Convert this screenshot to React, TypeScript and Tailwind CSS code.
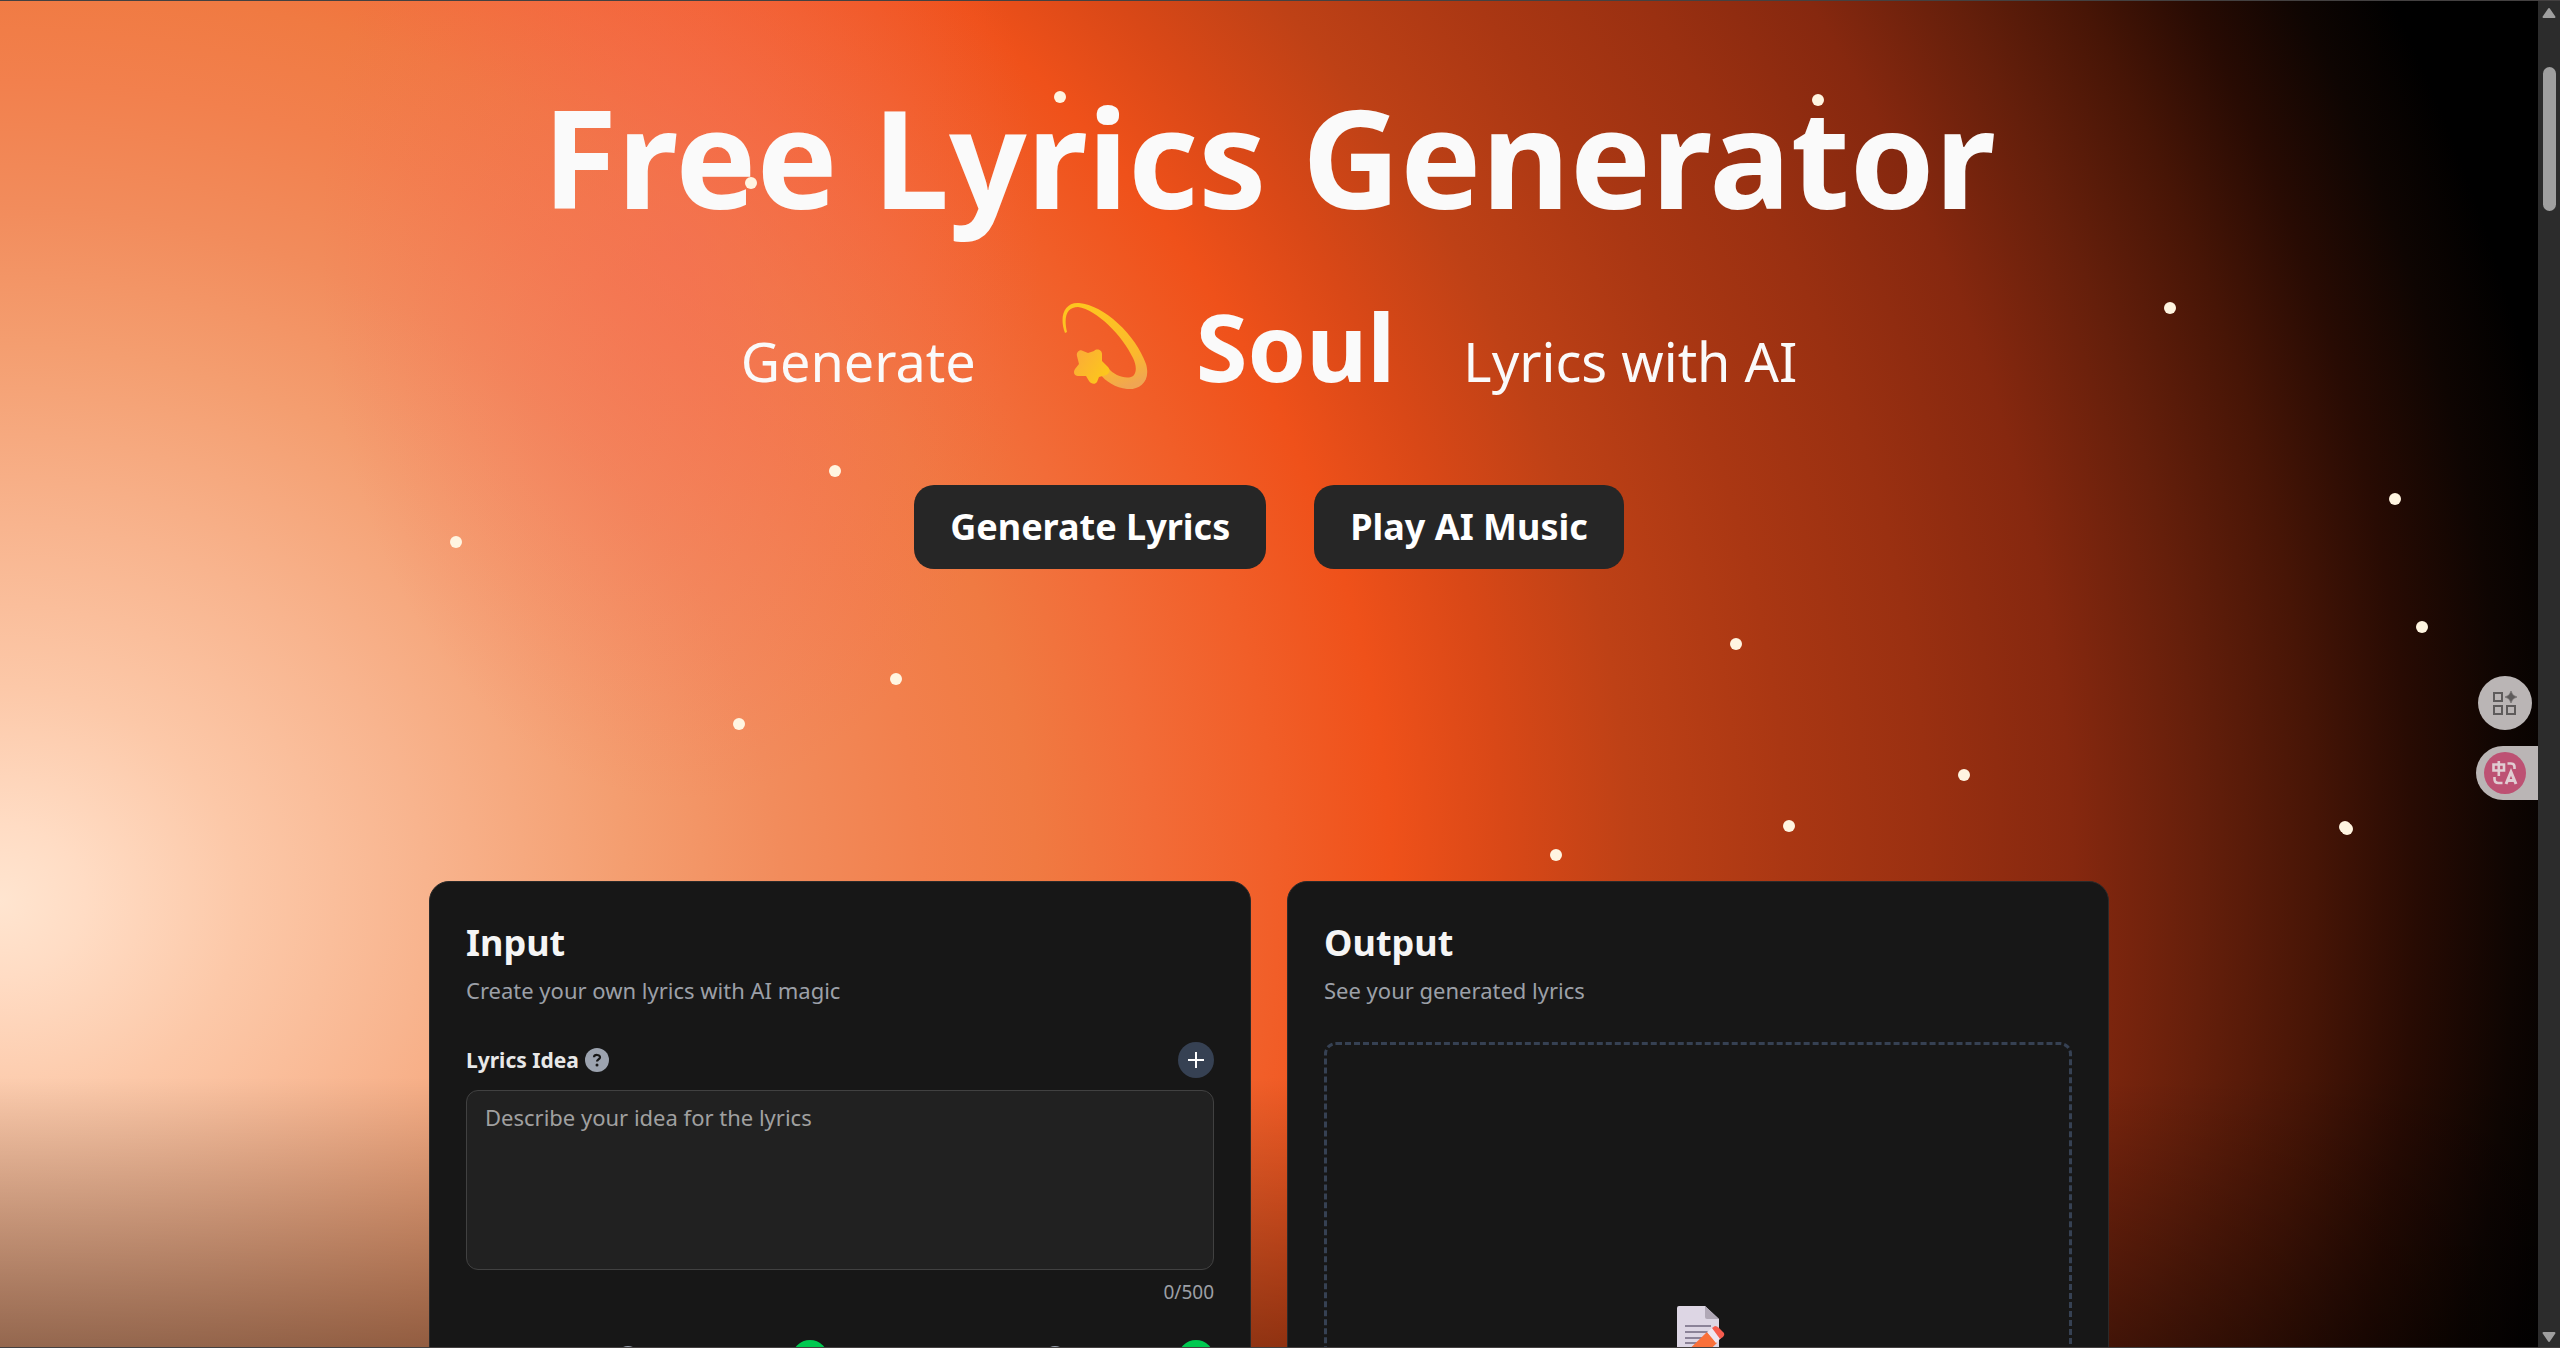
import React from "react";

const particles = [
  { x: 1060, y: 96 },
  { x: 751, y: 182 },
  { x: 1818, y: 99 },
  { x: 2170, y: 307 },
  { x: 835, y: 470 },
  { x: 456, y: 541 },
  { x: 2395, y: 498 },
  { x: 2422, y: 626 },
  { x: 1736, y: 643 },
  { x: 896, y: 678 },
  { x: 739, y: 723 },
  { x: 1964, y: 774 },
  { x: 1789, y: 825 },
  { x: 1556, y: 854 },
  { x: 2345, y: 826 },
  { x: 2347, y: 828 },
];

function DizzyStar() {
  return (
    <svg viewBox="0 0 88 88" className="size-[88px] self-center" aria-hidden="true">
      <defs>
        <linearGradient id="trail" x1="0.3" y1="0" x2="0.7" y2="1">
          <stop offset="0" stopColor="#fdc61f" />
          <stop offset="0.7" stopColor="#fbb82d" />
          <stop offset="1" stopColor="#f0a552" />
        </linearGradient>
        <linearGradient id="star" x1="0" y1="0" x2="1" y2="0.6">
          <stop offset="0" stopColor="#fba93a" />
          <stop offset="1" stopColor="#fcc71c" />
        </linearGradient>
      </defs>
      <path
        d="M5 31 C-1 15 4 0 19 1 C44 3 76 33 86 62 C91 79 80 88 67 87 C56 86 45 79 40 72 L48 66 C54 73 64 77 71 75 C77 73 77 64 73 56 C62 33 37 8 18 5 C8 5 3 13 7 30 Z"
        fill="url(#trail)"
      />
      <path
        d="M34 49 C37 46 42 48 42 52 L42 59 L48 65 C51 68 49 72 46 73 L39 75 L37 80 C35 83 31 82 29 79 L26 74 L18 74 C14 74 13 70 15 67 L19 62 L17 54 C16 50 20 47 23 49 L28 51 Z"
        fill="url(#star)"
      />
    </svg>
  );
}

function DocumentPencil() {
  return (
    <svg viewBox="0 0 96 96" className="size-24" aria-hidden="true">
      <path d="M27 9 H55 L69 22 V86 H29 Q27 86 27 84 V11 Q27 9 29 9 Z" fill="#ddd6e4" />
      <path d="M55 9 L69 22 H57 Q55 22 55 20 Z" fill="#b0a8b6" />
      <path d="M35 29 H61 M35 35 H61 M35 41 H58 M35 46 H54 M35 52 H50" stroke="#8b8398" strokeWidth="2" />
      <path d="M57 35 L67 46 L35 76 L25 66 Z" fill="#f9703a" />
      <path d="M57 35 L62 31 L71 41 L66 46 Z" fill="#eee6f2" />
      <path d="M62 31 L65 29 Q67 29 69 31 L74 36 Q75 38 73 40 L70 42 Z" fill="#f65c4e" />
    </svg>
  );
}

function HelpIcon() {
  return (
    <svg viewBox="0 0 24 24" className="size-6" aria-hidden="true">
      <circle cx="12" cy="12" r="12" fill="#9ca3af" />
      <path d="M9 9.2 C9.2 6.2 15.2 6.2 15 9.4 C14.8 11.4 12 11.4 12 13.6" fill="none" stroke="#171717" strokeWidth="2.2" />
      <circle cx="12" cy="17" r="1.5" fill="#171717" />
    </svg>
  );
}

function OptionHeader({ labelWidth, name }: { labelWidth: string; name: string }) {
  return (
    <div className="flex items-center justify-between">
      <div className={"flex justify-end " + labelWidth}>
        <HelpIcon />
      </div>
      <button aria-label={name} className="size-9 rounded-full bg-[#00c950]" />
    </div>
  );
}

function Card({ title, subtitle, children }: { title: string; subtitle: string; children: React.ReactNode }) {
  return (
    <section className="h-[1100px] flex-1 rounded-[20px] border border-[#2b2a2a] bg-[#171717] p-9">
      <h2 className="text-[36px] leading-[50px] font-bold text-[#f5f5f5]">{title}</h2>
      <p className="text-[22px] leading-[44px] text-[#9ca0a8]">{subtitle}</p>
      {children}
    </section>
  );
}

function FloatingTools() {
  return (
    <div className="absolute top-[675px] right-0 flex flex-col items-end gap-4">
      <button aria-label="Extensions" className="mr-1.5 flex size-[54px] items-center justify-center rounded-full bg-[#bab5b5]">
        <svg viewBox="0 0 24 24" className="size-6" fill="none" stroke="#5e5b5b" strokeWidth="2" aria-hidden="true">
          <rect x="1" y="2" width="8" height="8" />
          <rect x="1" y="15" width="8" height="8" />
          <rect x="14" y="15" width="8" height="8" />
          <path d="M18 0 Q19 5 24 6 Q19 7 18 12 Q17 7 12 6 Q17 5 18 0Z" fill="#5e5b5b" strokeWidth="0.5" />
        </svg>
      </button>
      <button aria-label="Translate" className="flex h-[54px] w-[62px] items-center rounded-l-full bg-[#bab5b5] pl-2">
        <svg viewBox="0 0 42 42" className="size-[42px]" fill="none" stroke="#e0ccd2" strokeWidth="2.600" aria-hidden="true">
          <circle cx="21" cy="21" r="21" fill="#bd5173" stroke="none" />
          <path d="M9.500 12.500 H20 V18.500 H9.500 Z M14.800 9 V24" />
          <path d="M23.500 11.500 H27 Q30.500 11.500 30.500 15 V17" />
          <path d="M10.500 25 V27 Q10.500 31 14.500 31 H18.500" />
          <path d="M22 32 L27 20 L32 32 M23.500 28.500 H30.500" strokeWidth="3" />
        </svg>
      </button>
    </div>
  );
}

function Scrollbar() {
  return (
    <div className="flex w-[22px] shrink-0 flex-col items-center justify-between bg-[#2c2c2c] pt-1.5 pb-1">
      <div className="flex flex-col items-center gap-12">
        <svg viewBox="0 0 14 12" className="h-3 w-3.5" aria-hidden="true">
          <path d="M7 2 L12.500 10 H1.500 Z" fill="#9f9f9f" stroke="#9f9f9f" strokeWidth="2" strokeLinejoin="round" />
        </svg>
        <div className="h-36 w-[13px] rounded-full bg-[#9f9f9f]" />
      </div>
      <svg viewBox="0 0 14 12" className="h-3 w-3.5" aria-hidden="true">
        <path d="M7 10 L12.500 2 H1.500 Z" fill="#9f9f9f" stroke="#9f9f9f" strokeWidth="2" strokeLinejoin="round" />
      </svg>
    </div>
  );
}

export default function App() {
  return (
    <div className="flex h-screen overflow-hidden border-y border-[#444141] bg-black font-['Noto_Sans',sans-serif]">
      <div className="relative flex-1 overflow-hidden bg-[radial-gradient(360px_560px_at_680px_240px,#f76a5a80_0%,#f76a5a00_100%),radial-gradient(1420px_1260px_at_0px_900px,#ffe5d0_0%,#ffdcc4_6%,#fcc8a8_17%,#f8b48e_30%,#f49e70_44%,#f28c5c_55%,#f2804d_65%,#f07a42_73%,#f26c38_81%,#f15e28_90%,#ef511a_98%,#d94817_106%,#be4116_115%,#aa3713_126%,#9a3011_136%,#86280f_146%,#651f0b_155%,#471506_163%,#280b03_170%,#0e0502_177%,#000000_183%)]">
        <div className="absolute inset-x-0 bottom-0 h-[270px] bg-linear-to-b from-transparent to-black/40" />

        <main className="relative flex flex-col items-center px-12">
          <h1 className="mt-[50px] text-[136px] leading-[212px] font-bold whitespace-nowrap text-[#fafafa]">Free Lyrics Generator</h1>
          <div className="mt-9 flex h-[132px] items-baseline text-[#fafafa]">
            <span className="text-[54px] leading-none">Generate</span>
            <span className="ml-[84px] flex items-baseline gap-12">
              <DizzyStar />
              <span className="text-[94px] leading-none font-bold">Soul</span>
            </span>
            <span className="ml-[68px] text-[54px] leading-none whitespace-nowrap">Lyrics with AI</span>
          </div>
          <div className="mt-[54px] flex gap-12">
            <button className="h-21 rounded-[20px] bg-[#262626] px-9 text-[36px] font-bold text-white">Generate Lyrics</button>
            <button className="h-21 rounded-[20px] bg-[#262626] px-9 text-[36px] font-bold text-white">Play AI Music</button>
          </div>

          <div className="mt-[312px] flex w-full max-w-[1680px] gap-9">
            <Card title="Input" subtitle="Create your own lyrics with AI magic">
              <div className="mt-[30px] flex items-center justify-between">
                <label htmlFor="idea" className="flex items-center gap-1.5 text-[21px] leading-9 font-bold text-[#e8e8e8]">
                  Lyrics Idea
                  <HelpIcon />
                </label>
                <button aria-label="Add" className="flex size-9 items-center justify-center rounded-full bg-[#364153]">
                  <svg viewBox="0 0 18 18" className="size-[18px]" aria-hidden="true">
                    <path d="M9 1 V17 M1 9 H17" stroke="#ffffff" strokeWidth="2" />
                  </svg>
                </button>
              </div>
              <textarea
                id="idea"
                placeholder="Describe your idea for the lyrics"
                className="mt-3 block h-[180px] w-full resize-none rounded-xl border border-[#414141] bg-[#212121] px-[18px] py-2.5 text-[22px] leading-8 text-white placeholder:text-[#a0a0a0]"
              />
              <p className="mt-1.5 text-right text-[19px] leading-8 text-[#9c9fa5]">0/500</p>
              <div className="mt-8 grid grid-cols-2 gap-6">
                <OptionHeader name="Toggle first option" labelWidth="w-[174px]" />
                <OptionHeader name="Toggle second option" labelWidth="w-[215px]" />
              </div>
            </Card>
            <Card title="Output" subtitle="See your generated lyrics">
              <div className="mt-[30px] flex h-[606px] items-center justify-center rounded-xl border-3 border-dashed border-[#364153]">
                <DocumentPencil />
              </div>
            </Card>
          </div>
        </main>

        <div className="pointer-events-none absolute inset-0">
          {particles.map((p) => (
            <i key={p.x + "-" + p.y} className="absolute size-3 -translate-1/2 rounded-full bg-[#fff5e1]" style={{ left: p.x, top: p.y }} />
          ))}
        </div>
        <FloatingTools />
      </div>
      <Scrollbar />
    </div>
  );
}
